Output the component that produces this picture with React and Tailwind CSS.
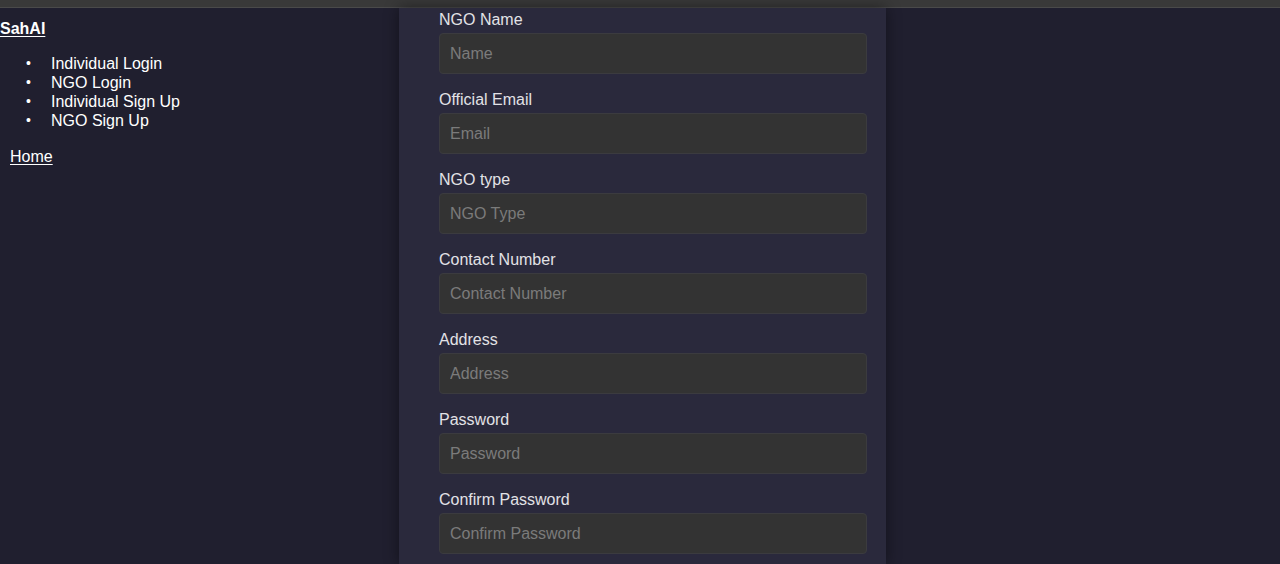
const fields = [
  { label: 'NGO Name', placeholder: 'Name', type: 'text' },
  { label: 'Official Email', placeholder: 'Email', type: 'email' },
  { label: 'NGO type', placeholder: 'NGO Type', type: 'text' },
  { label: 'Contact Number', placeholder: 'Contact Number', type: 'tel' },
  { label: 'Address', placeholder: 'Address', type: 'text' },
  { label: 'Password', placeholder: 'Password', type: 'password' },
  { label: 'Confirm Password', placeholder: 'Confirm Password', type: 'password' },
];

const navLinks = ['Individual Login', 'NGO Login', 'Individual Sign Up', 'NGO Sign Up'];

export default function App() {
  return (
    <div
      className="h-[564px] overflow-hidden bg-[#201f2f] text-white"
      style={{ fontFamily: '"Liberation Sans", Arial, sans-serif' }}
    >
      <div className="h-[8px] bg-[#393939] border-b border-[#4a4a4a]" />
      <div className="flex">
        <nav className="w-[399px] shrink-0">
          <a href="#" className="mt-[11px] block text-[16px] leading-[19px] font-bold underline underline-offset-2">
            SahAI
          </a>
          <ul className="mt-[16px] pl-[26px] text-[16px] leading-[19px]">
            {navLinks.map((item) => (
              <li key={item} className="flex">
                <span className="w-[25px] text-[14px]">•</span>
                <span>{item}</span>
              </li>
            ))}
          </ul>
          <a href="#" className="mt-[17px] ml-[10px] inline-block text-[16px] leading-[19px] underline underline-offset-2">
            Home
          </a>
        </nav>
        <form className="w-[487px] shrink-0 bg-[#2a293c] pl-[40px] pr-[19px] pt-[3px] shadow-[0_0_14px_rgba(0,0,0,0.45)] h-[556px]">
          {fields.map((f) => (
            <div key={f.label} className="mb-[17px]">
              <label className="block text-[16px] leading-[18px] text-[#e2e2e6] mb-[4px]">{f.label}</label>
              <input
                type={f.type}
                placeholder={f.placeholder}
                className="w-full h-[41px] rounded-[4px] border border-[#3b3b3f] bg-[#333333] px-[10px] text-[16px] text-white placeholder:text-[#7b7b7b] outline-none"
              />
            </div>
          ))}
        </form>
      </div>
    </div>
  );
}
